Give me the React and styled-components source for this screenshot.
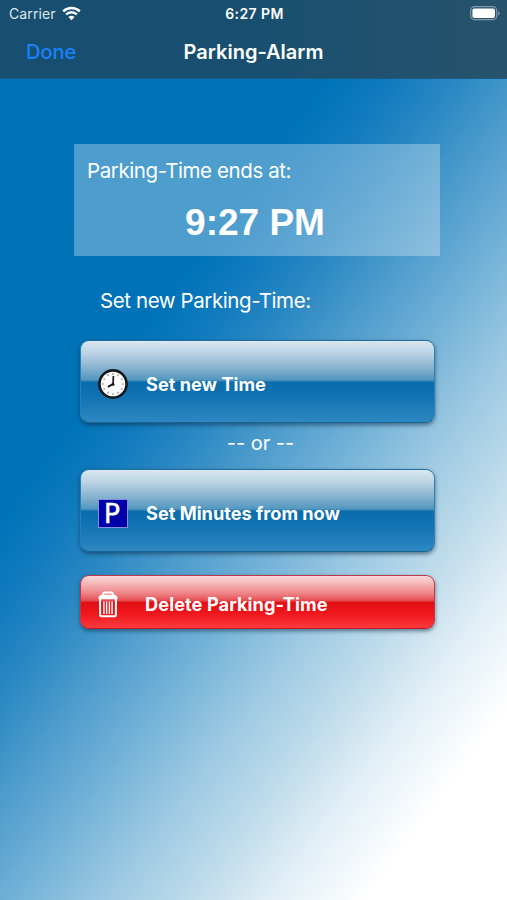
import styled, { createGlobalStyle } from "styled-components"

export default function App(){
    return(
        <Screen>
            <GlobalStyle />
            <Header>
                <StatusBar>
                    <Carrier>
                        <span>Carrier</span>
                        <WifiIcon />
                    </Carrier>
                    <Clock>6:27 PM</Clock>
                    <BatteryIcon />
                </StatusBar>
                <NavBar>
                    <Done>Done</Done>
                    <Title>Parking-Alarm</Title>
                </NavBar>
            </Header>
            <Main>
                <EndsCard>
                    <Label>Parking-Time ends at:</Label>
                    <EndTime>9:27 PM</EndTime>
                </EndsCard>
                <SetLabel>Set new Parking-Time:</SetLabel>
                <Actions>
                    <GlossyButton>
                        <IconBox><ClockIcon /></IconBox>
                        <ButtonText>Set new Time</ButtonText>
                    </GlossyButton>
                    <Or>-- or --</Or>
                    <GlossyButton>
                        <IconBox><ParkingSign>P</ParkingSign></IconBox>
                        <ButtonText>Set Minutes from now</ButtonText>
                    </GlossyButton>
                    <DeleteButton>
                        <IconBox $width="47px"><TrashIcon /></IconBox>
                        <ButtonText $spacing="0.08px">Delete Parking-Time</ButtonText>
                    </DeleteButton>
                </Actions>
            </Main>
        </Screen>
    )
}

function WifiIcon(){
    return(
        <svg width="19" height="15" viewBox="0 0 19 15" fill="none" stroke="#fff" strokeWidth="2.4">
            <path d="M1.2 5.3a12 12 0 0 1 16.6 0" />
            <path d="M4.1 8.4a7.8 7.8 0 0 1 10.8 0" />
            <path d="M9.5 14.3 6.4 11.1a4.5 4.5 0 0 1 6.2 0z" fill="#fff" stroke="none" />
        </svg>
    )
}

function BatteryIcon(){
    return(
        <svg width="31" height="15" viewBox="0 0 31 15">
            <rect x="1.7" y="0.7" width="26" height="13" rx="3.8" fill="none" stroke="#7d99aa" strokeWidth="1.2" />
            <rect x="3.4" y="2.5" width="22.6" height="9.4" rx="2" fill="#fff" />
            <path d="M29.1 5v4.6c1-.4 1.6-1.3 1.6-2.3S30.1 5.4 29.1 5z" fill="#7d99aa" />
        </svg>
    )
}

function ClockIcon(){
    const marks = [0, 30, 60, 90, 120, 150, 180, 210, 240, 270, 300, 330]
    return(
        <svg width="30" height="30" viewBox="0 0 30 30">
            <circle cx="15" cy="15" r="13.6" fill="#fdfdfd" stroke="#15181b" strokeWidth="2.6" />
            {marks.map((angle) => (
                <path key={angle} d="M15 3.9v2" stroke="#999" strokeWidth="1.2" transform={`rotate(${angle} 15 15)`} />
            ))}
            <path d="M15.4 7 15 15.2" fill="none" stroke="#1b1d20" strokeWidth="1.7" />
            <path d="M15 15.2 9.8 17.8" fill="none" stroke="#1b1d20" strokeWidth="1.9" />
            <circle cx="15" cy="15.2" r="1.5" fill="#1b1d20" />
        </svg>
    )
}

function TrashIcon(){
    return(
        <svg width="20" height="27" viewBox="0 0 20 27" fill="none" stroke="#fff">
            <path d="M5.2 4.2V3.2Q5.2 1.5 7 1.5h6Q14.8 1.5 14.8 3.2v1" strokeWidth="2" />
            <path d="M3 3.8h14l2.5 2.3v2.2H.5V6.1z" fill="#fff" stroke="none" />
            <path d="M2.1 8v15.8q0 1.5 1.5 1.5h12.8q1.5 0 1.5-1.5V8" strokeWidth="2" />
            <path d="M5.9 10.5v12.5M8.6 10.5v12.5M11.4 10.5v12.5M14.1 10.5v12.5" strokeWidth="1.4" />
        </svg>
    )
}

const GlobalStyle = createGlobalStyle`
    body{
        margin: 0;
    }

    *{
        box-sizing: border-box;
    }
`

const Screen = styled.div`
    width: 507px;
    height: 900px;
    overflow: hidden;
    font-family: Inter, "Liberation Sans", sans-serif;
    color: #FFFFFF;
    background: linear-gradient(126.5deg, #0072b8 0%, #0073b8 33%, #0f7abd 38%, #2a88c3 44%, #4a9acb 50%, #6eafd6 57%, #9ecae2 66%, #bcdaea 72.5%, #e2eff6 80%, #fff 88%);
`

const Header = styled.header`
    height: 79px;
    background: linear-gradient(to right, #184f70 50%, #27536c);
    border-bottom: 1px solid #195d87;
`

const StatusBar = styled.div`
    height: 27px;
    padding: 0 7px 0 9px;
    display: grid;
    grid-template-columns: 1fr auto 1fr;
    align-items: center;

    > svg{
        justify-self: end;
    }
`

const Carrier = styled.div`
    display: flex;
    align-items: center;
    gap: 6px;
    font-size: 14px;
    letter-spacing: 0.1px;
    color: #dce6ec;
`

const Clock = styled.span`
    font-size: 14px;
    font-weight: 600;
    letter-spacing: 0.4px;
`

const NavBar = styled.nav`
    height: 50px;
    padding: 0 26px;
    display: grid;
    grid-template-columns: 1fr auto 1fr;
    align-items: center;
`

const Done = styled.span`
    font-size: 20px;
    font-weight: 500;
    color: #1683fb;
`

const Title = styled.h1`
    margin: 0;
    font-size: 20px;
    font-weight: 600;
`

const Main = styled.main`
    padding: 65px 67px 0 74px;
`

const EndsCard = styled.section`
    height: 112px;
    padding: 14px 13px 0;
    background: rgba(255, 255, 255, 0.3);
`

const Label = styled.p`
    margin: 0;
    font-size: 20.5px;
    line-height: 26px;
    letter-spacing: -0.41px;
    white-space: nowrap;
`

const EndTime = styled.p`
    margin: 18px 0 0;
    padding-right: 4px;
    font-family: "Liberation Sans", sans-serif;
    font-size: 37px;
    line-height: 42px;
    font-weight: 700;
    text-align: center;
`

const SetLabel = styled(Label)`
    margin: 32px 0 0 26px;
`

const Actions = styled.div`
    display: flex;
    flex-direction: column;
    margin: 26px 5px 0 6px;
`

const GlossyButton = styled.button`
    height: 83px;
    padding: 5px 17px 0;
    display: flex;
    align-items: center;
    border: 1px solid;
    border-color: #226f9f #2e80b1 #186493 #2380b9;
    border-radius: 9px;
    background: linear-gradient(#d9e7f1 0%, #bdd4e5 14%, #8bb5d0 32%, #5397bf 48%, #0b6cab 51%, #0e71b1 65%, #2d87c1 100%);
    box-shadow: 0 2px 4px rgba(15, 45, 75, 0.6);
    font-family: inherit;
    color: #FFFFFF;
`

const DeleteButton = styled(GlossyButton)`
    height: 54px;
    margin-top: 23px;
    padding-top: 4px;
    border-color: #b83a4d #d32f3d #c31925 #d32f3d;
    background: linear-gradient(#fbd9db 0%, #f5b6b8 15%, #ed7f82 35%, #e64d51 47%, #e01015 51%, #ee151a 70%, #fb3a3e 100%);
`

const IconBox = styled.span`
    width: ${props => props.$width || "48px"};
    display: flex;
    align-items: center;
`

const ButtonText = styled.span`
    font-size: 18.2px;
    line-height: 24px;
    font-weight: 700;
    letter-spacing: ${props => props.$spacing || "0"};
    white-space: nowrap;
`

const Or = styled.p`
    height: 46px;
    margin: 0;
    padding: 0 0 6px 6px;
    display: flex;
    align-items: center;
    justify-content: center;
    font-size: 20px;
`

const ParkingSign = styled.span`
    width: 30px;
    height: 29px;
    padding-right: 2px;
    display: flex;
    align-items: center;
    justify-content: center;
    border: 1px solid #8c8ce0;
    background: #0000aa;
    font-family: "DejaVu Sans", sans-serif;
    font-size: 27px;
    line-height: 27px;
    -webkit-text-stroke: 0.4px #FFFFFF;
`
